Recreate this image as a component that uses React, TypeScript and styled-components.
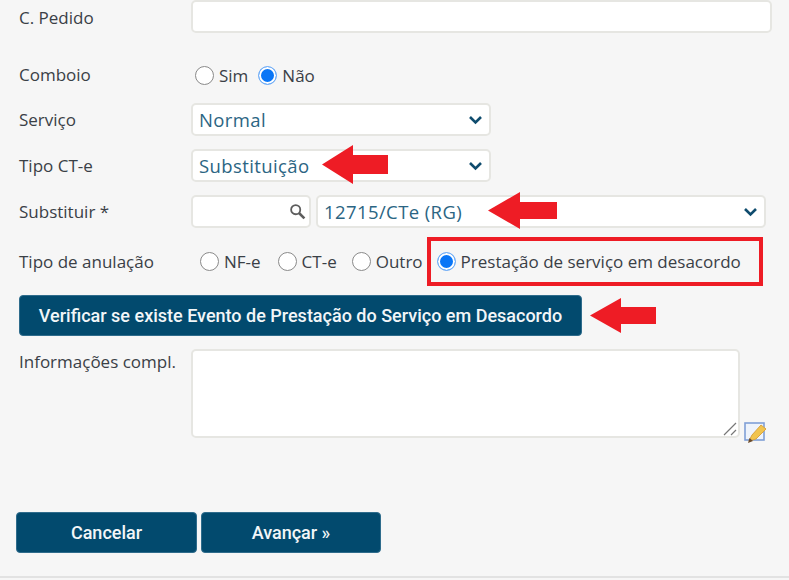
import React from "react";
import styled, { createGlobalStyle } from "styled-components";

const Global = createGlobalStyle`
  html, body { margin: 0; padding: 0; background: #f6f6f6; }
  body { font-family: "Open Sans", "Noto Sans", "Liberation Sans", sans-serif; }
`;

const Page = styled.div`
  position: relative;
  width: 789px;
  height: 578px;
  overflow: hidden;
  background: #f6f6f6;
  box-sizing: border-box;
  border-bottom: 2px solid #e2e2e2;
  color: #333a40;
`;

const Form = styled.div`
  display: flex;
  flex-direction: column;
  padding-left: 19px;
`;

const Row = styled.div<{ $h: number; $mt?: number }>`
  display: flex;
  align-items: center;
  height: ${(p) => p.$h}px;
  margin-top: ${(p) => p.$mt ?? 0}px;
`;

const TopRow = styled(Row)`
  align-items: flex-start;
`;

const Label = styled.label<{ $nudge?: number }>`
  flex: 0 0 172px;
  font-size: 17px;
  line-height: 22px;
  color: #3a4046;
  white-space: nowrap;
  padding-top: ${(p) => p.$nudge ?? 0}px;
`;

const Field = styled.div<{ $w: number; $ml?: number }>`
  box-sizing: border-box;
  width: ${(p) => p.$w}px;
  height: 100%;
  margin-left: ${(p) => p.$ml ?? 0}px;
  background: #fff;
  border: 2px solid #e6e6e2;
  border-radius: 5px;
  display: flex;
  align-items: center;
  justify-content: space-between;
  padding: 0 6px 0 6px;
  font-size: 18.5px;
  letter-spacing: 0.4px;
  color: #2b6583;
  white-space: nowrap;
`;

const Options = styled.div<{ $ml?: number }>`
  display: flex;
  align-items: center;
  margin-left: ${(p) => p.$ml ?? 0}px;
`;

const RadioOption = styled.span<{ $mr?: number }>`
  display: inline-flex;
  align-items: center;
  gap: 5px;
  margin-right: ${(p) => p.$mr ?? 0}px;
  font-size: 17px;
  color: #3a4046;
  white-space: nowrap;
`;

const Dot = styled.span<{ $on?: boolean }>`
  box-sizing: border-box;
  width: 19px;
  height: 19px;
  border-radius: 50%;
  background: ${(p) => (p.$on ? "#0a76f6" : "#fff")};
  border: ${(p) => (p.$on ? "1.5px solid #79b2f7" : "1.5px solid #8a8a8a")};
  box-shadow: ${(p) => (p.$on ? "inset 0 0 0 2px #fff" : "none")};
`;

const Highlight = styled.div`
  box-sizing: border-box;
  display: flex;
  align-items: center;
  width: 336px;
  height: 49px;
  margin-left: 4px;
  padding-left: 6px;
  border: 4px solid #ee1c25;
`;

const DarkButton = styled.button<{ $w: number }>`
  box-sizing: border-box;
  width: ${(p) => p.$w}px;
  height: 100%;
  border: 1px solid #2f6c8c;
  border-radius: 4px;
  background: #024a6e;
  color: #f2f6f8;
  font-family: "Roboto", "Liberation Sans", sans-serif;
  font-size: 18px;
  font-weight: 500;
  padding: 0;
`;

const Notes = styled.div`
  box-sizing: border-box;
  position: relative;
  width: 549px;
  height: 89px;
  background: #fff;
  border: 2px solid #e6e6e2;
  border-radius: 5px;
`;

const Grip = styled.svg`
  position: absolute;
  right: 0;
  bottom: 0;
`;

const NoteIcon = styled.svg`
  flex: none;
  align-self: flex-end;
  margin: 0 0 -6px 4px;
`;

const SearchIcon = styled.svg`
  margin-right: -3px;
`;

const Footer = styled.div`
  display: flex;
  gap: 4px;
  height: 41px;
  margin: 74px 0 0 16px;
`;

const Arrow = styled.svg<{ $x: number; $y: number }>`
  position: absolute;
  left: ${(p) => p.$x}px;
  top: ${(p) => p.$y}px;
`;

const Chevron = () => (
  <svg width="15" height="10" viewBox="0 0 15 10">
    <path d="M2 2 L7.5 7.5 L13 2" fill="none" stroke="#0f4c6e" strokeWidth="2.6" />
  </svg>
);

const SearchGlyph = () => (
  <SearchIcon width="17" height="17" viewBox="0 0 16 16">
    <circle cx="6.3" cy="6.3" r="4.3" fill="none" stroke="#5d5d5d" strokeWidth="1.7" />
    <path d="M9.4 9.4 L14.5 14.5" stroke="#5d5d5d" strokeWidth="2.4" />
  </SearchIcon>
);

const RedArrow = ({ x, y, w, h }: { x: number; y: number; w: number; h: number }) => {
  const head = Math.round(w * 0.47);
  const t = Math.round(h * 0.26);
  return (
    <Arrow $x={x} $y={y} width={w} height={h} viewBox={`0 0 ${w} ${h}`}>
      <path d={`M0 ${h / 2} L${head} 0 V${t} H${w} V${h - t} H${head} V${h} Z`} fill="#ee1c25" />
    </Arrow>
  );
};

export default function App() {
  return (
    <Page>
      <Global />
      <Form>
        <TopRow $h={33}>
          <Label $nudge={7}>C. Pedido</Label>
          <Field $w={581} />
        </TopRow>
        <Row $h={26} $mt={29}>
          <Label>Comboio</Label>
          <Options $ml={4}>
            <RadioOption $mr={10}>
              <Dot />
              Sim
            </RadioOption>
            <RadioOption>
              <Dot $on />
              Não
            </RadioOption>
          </Options>
        </Row>
        <Row $h={33} $mt={15}>
          <Label>Serviço</Label>
          <Field $w={300}>
            Normal
            <Chevron />
          </Field>
        </Row>
        <Row $h={33} $mt={13}>
          <Label>Tipo CT-e</Label>
          <Field $w={300}>
            Substituição
            <Chevron />
          </Field>
        </Row>
        <Row $h={33} $mt={13}>
          <Label>Substituir *</Label>
          <Field $w={120}>
            <span />
            <SearchGlyph />
          </Field>
          <Field $w={450} $ml={5}>
            12715/CTe (RG)
            <Chevron />
          </Field>
        </Row>
        <Row $h={49} $mt={9}>
          <Label>Tipo de anulação</Label>
          <Options $ml={9}>
            <RadioOption $mr={17}>
              <Dot />
              NF-e
            </RadioOption>
            <RadioOption $mr={15}>
              <Dot />
              CT-e
            </RadioOption>
            <RadioOption>
              <Dot />
              Outro
            </RadioOption>
            <Highlight>
              <RadioOption>
                <Dot $on />
                Prestação de serviço em desacordo
              </RadioOption>
            </Highlight>
          </Options>
        </Row>
        <Row $h={41} $mt={9}>
          <DarkButton $w={563}>Verificar se existe Evento de Prestação do Serviço em Desacordo</DarkButton>
        </Row>
        <TopRow $h={89} $mt={13}>
          <Label $nudge={2}>Informações compl.</Label>
          <Notes>
            <Grip width="16" height="16" viewBox="0 0 16 16">
              <path d="M2 15 L14 3 M9 15 L14 10" stroke="#777" strokeWidth="1.2" />
            </Grip>
          </Notes>
          <NoteIcon width="23" height="22" viewBox="0 0 23 22">
            <rect x="1" y="1" width="19" height="17" fill="#eef3fb" stroke="#7f9fd6" strokeWidth="1.6" />
            <path d="M5 19 L8 13 L17 3 L22 7 L12 17 Z" fill="#f1c44e" stroke="#d9a441" strokeWidth="1" />
            <path d="M4 21 L5.5 16 L9 19 Z" fill="#6b4a2a" />
          </NoteIcon>
        </TopRow>
      </Form>
      <Footer>
        <DarkButton $w={181}>Cancelar</DarkButton>
        <DarkButton $w={180}>Avançar »</DarkButton>
      </Footer>
      <RedArrow x={322} y={145} w={66} h={39} />
      <RedArrow x={488} y={192} w={69} h={37} />
      <RedArrow x={590} y={298} w={66} h={35} />
    </Page>
  );
}
